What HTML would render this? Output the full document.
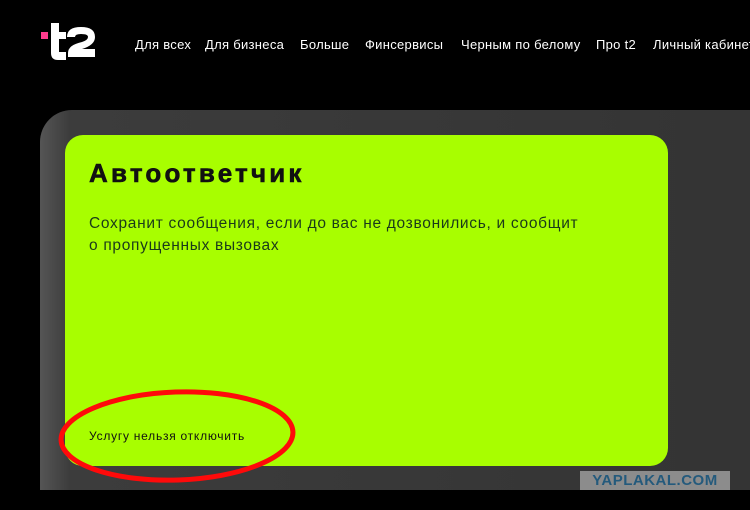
<!DOCTYPE html>
<html><head><meta charset="utf-8"><style>
body{margin:0;width:750px;height:510px;background:#000;overflow:hidden;position:relative;font-family:"Liberation Sans",sans-serif}
.nav span{position:absolute;top:37px;color:#fff;font-size:13px;white-space:nowrap;letter-spacing:.3px}
.panel{position:absolute;left:40px;top:110px;width:760px;height:380px;background:linear-gradient(90deg,#555 0,#3c3c3c 30px,#333 100%);border-top-left-radius:32px}
.card{position:absolute;left:65px;top:135px;width:603px;height:331px;background:#a8fe00;border-radius:18px}
h1{position:absolute;left:24px;top:23px;margin:0;font-size:26px;font-weight:900;letter-spacing:3.2px;color:#111;white-space:nowrap;-webkit-text-stroke:.6px #111}
.d{position:absolute;left:24px;top:78px;font-size:15.5px;line-height:22px;color:#1a3a1a;letter-spacing:.7px;white-space:nowrap}
.f{position:absolute;left:24px;top:294px;font-size:12px;color:#111;letter-spacing:.75px}
.wm{position:absolute;left:580px;top:471px;width:150px;height:19px;background:#8c8c8c;color:#245a7c;font-weight:900;font-size:15px;text-align:center;line-height:19px;letter-spacing:.5px}
</style></head><body>
<svg style="position:absolute;left:38px;top:20px" width="62" height="45">
<rect x="3" y="12" width="7" height="7" fill="#ff3b8d"/>
<path d="M13 3h8v9h7v7h-7v13h7v8h-8q-7 0-7-7V3z" fill="#fff"/>
<path d="M29 17q0-10 14-10q14 0 14 10q0 8-13 12h13v8h-27v-4q0-8 14-11q6-2 6-5q0-3-7-3q-6 0-6 3z" fill="#fff"/>
</svg>
<div class="nav"><span style="left:135px">Для всех</span><span style="left:205px">Для бизнеса</span><span style="left:300px">Больше</span><span style="left:365px">Финсервисы</span><span style="left:461px">Черным по белому</span><span style="left:596px">Про t2</span><span style="left:653px">Личный кабинет</span></div>
<div class="panel"></div>
<div class="card">
<h1>Автоответчик</h1>
<div class="d">Сохранит сообщения, если до вас не дозвонились, и сообщит<br>о пропущенных вызовах</div>
<div class="f">Услугу нельзя отключить</div>
</div>
<svg style="position:absolute;left:0;top:0" width="750" height="510"><ellipse cx="177" cy="436" rx="116" ry="44" fill="none" stroke="#ff0a0a" stroke-width="5" transform="rotate(-2 177 436)"/></svg>
<div class="wm">YAPLAKAL.COM</div>
</body></html>
